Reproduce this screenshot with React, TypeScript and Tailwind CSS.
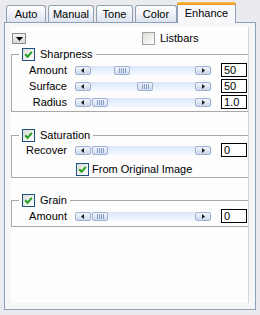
import clsx from "clsx";

function Check({ checked }: { checked?: boolean }) {
  return (
    <span
      className={clsx(
        "flex h-[13px] w-[13px] shrink-0 items-center justify-center border bg-linear-to-br from-[#dcdcd7] to-white",
        checked ? "border-[#1c5180]" : "border-[#a2a2a2]"
      )}
    >
      {checked && (
        <svg width="9" height="9" viewBox="0 0 9 9">
          <path d="M1.2 4.2 L3.6 6.8 L7.8 1.8" stroke="#21a121" strokeWidth="2" fill="none" />
        </svg>
      )}
    </span>
  );
}

function ArrowBtn({ dir }: { dir: "left" | "right" }) {
  return (
    <div className="flex h-[9px] w-[16px] shrink-0 items-center justify-center rounded-[2px] border border-[#9fb2d2] bg-linear-to-b from-[#f1f5fd] to-[#cbd8ef]">
      <svg width="4" height="5" viewBox="0 0 4 5">
        {dir === "left" ? (
          <path d="M0 2.5 L3 0 L3 5 z" fill="#1a1a1a" />
        ) : (
          <path d="M4 2.5 L1 0 L1 5 z" fill="#1a1a1a" />
        )}
      </svg>
    </div>
  );
}

function Slider({ thumb }: { thumb: string }) {
  return (
    <div className="ml-[8px] mt-[1px] flex h-[9px] w-[136px]">
      <ArrowBtn dir="left" />
      <div className="flex flex-1 bg-linear-to-b from-[#dbe6fa] to-[#f5f8fe]">
        <div
          className={clsx(
            thumb,
            "flex h-[9px] w-[16px] items-center justify-center gap-px rounded-[2px] border border-[#9fb2d2] bg-linear-to-b from-[#f1f5fd] to-[#cfdbf0]"
          )}
        >
          <span className="h-[5px] w-px bg-[#8a9ec2]" />
          <span className="h-[5px] w-px bg-[#8a9ec2]" />
          <span className="h-[5px] w-px bg-[#8a9ec2]" />
          <span className="h-[5px] w-px bg-[#8a9ec2]" />
        </div>
      </div>
      <ArrowBtn dir="right" />
    </div>
  );
}

function Row({ label, value, thumb }: { label: string; value: string; thumb: string }) {
  return (
    <div className="flex h-[16px] items-center">
      <span className="w-[55px] text-right leading-[16px]">{label}</span>
      <Slider thumb={thumb} />
      <div className="ml-[10px] h-[14px] w-[26px] border border-black bg-white pl-[2px] leading-[12px]">
        {value}
      </div>
    </div>
  );
}

function Group({ title, className, children }: { title: string; className: string; children: React.ReactNode }) {
  return (
    <fieldset className={clsx("border border-r-0 border-[#a9a9a9] p-0", className)}>
      <legend className="ml-[7px] flex h-[13px] items-center gap-[5px] px-[3px] leading-[13px]">
        <Check checked />
        <span>{title}</span>
      </legend>
      {children}
    </fieldset>
  );
}

const tab = "flex h-[17px] items-center justify-center rounded-t-[3px] border-x border-t border-[#919fb4] bg-linear-to-b from-white to-[#dde4ef] pt-px";

export default function App() {
  return (
    <div className="h-[315px] w-[260px] bg-[#ebeaee] px-[4px] pt-[2px] font-['Liberation_Sans',Arial,sans-serif] text-[11px] text-black">
      {/* Tabs */}
      <div className="flex h-[20px] items-end pl-[2px]">
        <div className={clsx(tab, "w-[40px]")}>Auto</div>
        <div className={clsx(tab, "ml-[2px] w-[46px]")}>Manual</div>
        <div className={clsx(tab, "ml-[2px] w-[37px]")}>Tone</div>
        <div className={clsx(tab, "ml-[2px] w-[42px]")}>Color</div>
        <div className="relative z-10 -mb-px flex h-[21px] w-[59px] flex-col rounded-t-[3px] border-x border-[#919fb4] bg-[#f8f8fb]">
          <div className="-mx-px h-[3px] rounded-t-[3px] bg-linear-to-b from-[#ffc83c] to-[#e68b2c]" />
          <div className="flex flex-1 items-center justify-center pb-[2px]">Enhance</div>
        </div>
      </div>

      {/* Panel */}
      <div className="flex h-[288px] flex-col border border-[#8ea1bc] bg-[#f6f6f9]">
        <div className="mb-[6px] ml-[6px] mr-[6px] mt-[4px] flex flex-1 flex-col border-r border-[#d6d6da] bg-[#fdfdfe]">
          <div className="mt-[5px] flex h-[13px] items-center">
            <div className="ml-[1px] flex h-[11px] w-[14px] items-center justify-center border border-[#8c8c8c] bg-linear-to-b from-[#f4f4f4] to-[#d8d8d8]">
              <svg width="7" height="4" viewBox="0 0 7 4">
                <path d="M0 0 L7 0 L3.5 4 z" fill="#000" />
              </svg>
            </div>
            <div className="ml-[116px] flex items-center gap-[5px]">
              <Check />
              <span className="leading-[13px]">Listbars</span>
            </div>
          </div>

          <Group title="Sharpness" className="mt-[3px] pb-[1px] pt-[1px]">
            <Row label="Amount" value="50" thumb="ml-[23px]" />
            <Row label="Surface" value="50" thumb="ml-[46px]" />
            <Row label="Radius" value="1.0" thumb="ml-[1px]" />
          </Group>

          <Group title="Saturation" className="mt-[17px]">
            <Row label="Recover" value="0" thumb="ml-[1px]" />
            <div className="ml-[64px] mt-[3px] flex h-[16px] items-center gap-[3px]">
              <Check checked />
              <span className="leading-[16px]">From Original Image</span>
            </div>
          </Group>

          <Group title="Grain" className="mt-[16px] pb-[2px] pt-[1px]">
            <Row label="Amount" value="0" thumb="ml-[1px]" />
          </Group>
        </div>
      </div>
    </div>
  );
}
